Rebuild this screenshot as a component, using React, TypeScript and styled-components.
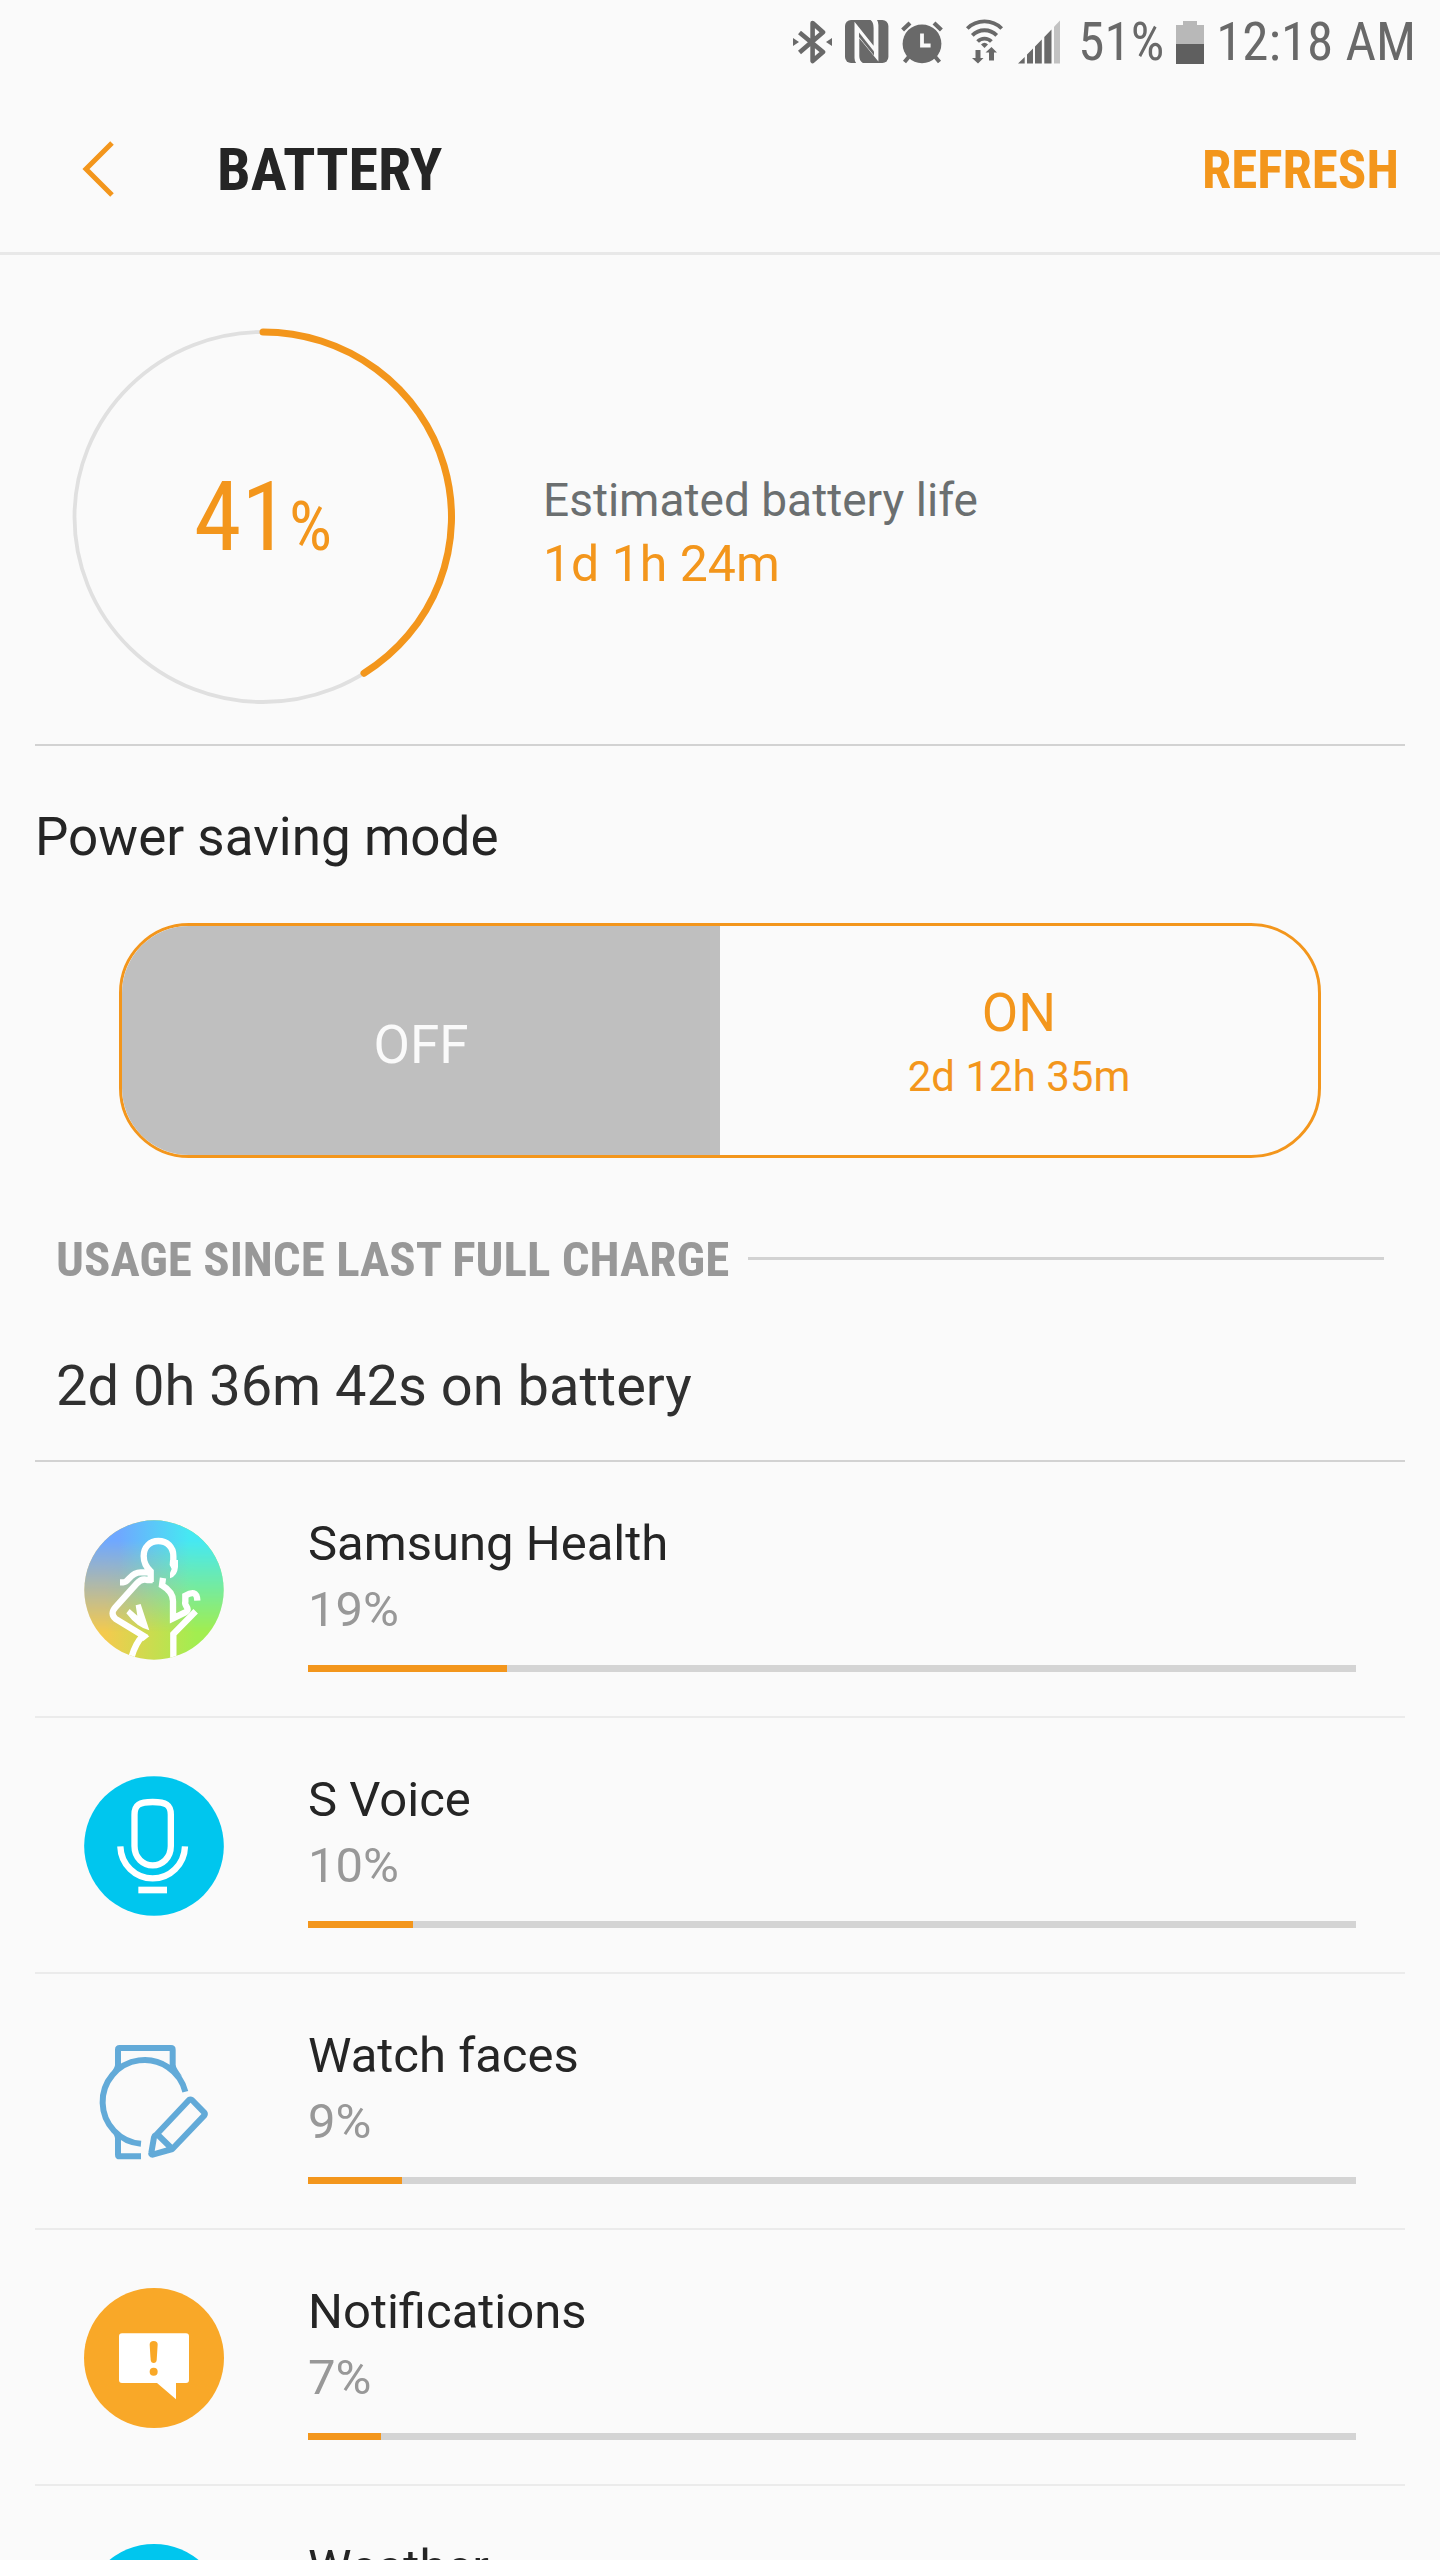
import React, { useState } from "react";
import styled, { createGlobalStyle } from "styled-components";

const color = {
  page: "#fafafa",
  accent: "#f3961c",
  ink: "#252525",
  body: "#303030",
  label: "#6b6f70",
  status: "#696969",
  muted: "#989898",
  rule: "#d2d2d2",
  hairline: "#ebebeb",
};

const condensed = `"Roboto Condensed", Roboto, sans-serif`;

const GlobalStyle = createGlobalStyle`
  *, *::before, *::after { box-sizing: border-box; }
  body { margin: 0; background: ${color.page}; font-family: Roboto, sans-serif; color: ${color.ink}; }
  h1, h2, h3, p, ul { margin: 0; padding: 0; font-weight: 400; }
  button { border: 0; padding: 0; background: none; font: inherit; color: inherit; cursor: pointer; }
  svg { display: block; flex: none; }
`;

const Screen = styled.div`
  display: flex;
  flex-direction: column;
  height: 100vh;
  overflow: hidden;
`;

const StatusBar = styled.div`
  flex: none;
  display: flex;
  align-items: center;
  justify-content: flex-end;
  gap: 12px;
  height: 88px;
  padding: 0 24px 4px 0;
  color: ${color.status};
  font: 400 53px/64px ${condensed};
`;

const StatusPercent = styled.span`
  padding-left: 6px;
`;

const Header = styled.header`
  flex: none;
  display: flex;
  align-items: center;
  height: 167px;
  padding: 0 41px 0 76px;
  border-bottom: 3px solid #e8e8e8;
`;

const Title = styled.h1`
  flex: 1;
  margin-left: 93px;
  font: 700 60px/72px ${condensed};
`;

const Refresh = styled.button`
  color: ${color.accent};
  font: 700 53px/64px ${condensed};
`;

const Content = styled.main`
  flex: 1;
  min-height: 0;
  overflow-y: auto;
  scrollbar-width: none;
  padding: 0 35px;
`;

const Summary = styled.section`
  display: flex;
  align-items: center;
  gap: 88px;
  padding: 73px 0 40px 36px;
  border-bottom: 2px solid ${color.rule};
`;

const Gauge = styled.div`
  display: grid;
  place-items: center;
  & > * { grid-area: 1 / 1; }
`;

const GaugeValue = styled.p`
  padding-top: 12px;
  color: ${color.accent};
  font: 400 96px/112px ${condensed};
`;

const GaugeUnit = styled.span`
  font-size: 68px;
`;

const Estimate = styled.div`
  padding-top: 32px;
  line-height: 64px;
`;

const EstimateLabel = styled.h2`
  color: ${color.label};
  font-size: 46px;
`;

const EstimateValue = styled.p`
  color: ${color.accent};
  font-size: 50px;
`;

const PowerSection = styled.section`
  padding-top: 58px;
`;

const PowerTitle = styled.h2`
  font-size: 53px;
  line-height: 66px;
`;

const Toggle = styled.div`
  display: grid;
  grid-template-columns: 1fr 1fr;
  height: 235px;
  margin: 53px 84px 0;
  border: 3px solid ${color.accent};
  border-radius: 70px;
  overflow: hidden;
`;

const ToggleOption = styled.button<{ $active: boolean }>`
  display: flex;
  flex-direction: column;
  align-items: center;
  justify-content: center;
  padding-top: 8px;
  background: ${(p) => (p.$active ? "#bfbfbf" : "transparent")};
  color: ${(p) => (p.$active ? color.page : color.accent)};
  font-size: 53px;
  line-height: 64px;
`;

const ToggleNote = styled.span`
  font-size: 42px;
`;

const UsageHeading = styled.div`
  display: flex;
  align-items: center;
  gap: 19px;
  margin-top: 72px;
  padding: 0 21px;
`;

const UsageTitle = styled.h2`
  color: ${color.muted};
  font: 700 49px/60px ${condensed};
`;

const UsageRule = styled.span`
  flex: 1;
  height: 3px;
  margin-bottom: 4px;
  background: ${color.rule};
`;

const OnBattery = styled.p`
  padding: 56px 21px 34px;
  border-bottom: 2px solid ${color.rule};
  color: ${color.body};
  font-size: 56px;
  line-height: 80px;
`;

const AppList = styled.ul`
  list-style: none;
`;

const AppRow = styled.li`
  display: flex;
  align-items: center;
  gap: 84px;
  padding: 0 49px;
  border-bottom: 2px solid ${color.hairline};

  & > svg { margin-top: 2px; }
`;

const AppInfo = styled.div`
  flex: 1;
  padding: 49px 0 44px;
  font-size: 49px;
  line-height: 66px;
`;

const AppName = styled.h3`
  font-size: inherit;
`;

const AppPercent = styled.p`
  color: ${color.muted};
`;

const Track = styled.div`
  height: 7px;
  margin-top: 22px;
  background: #d4d4d4;
`;

const Fill = styled.div`
  height: 100%;
  background: ${color.accent};
`;

const BluetoothIcon = () => (
  <svg width="40" height="44" viewBox="793 19 40 44" aria-hidden="true">
    <path d="M799.5 31.5 823 51 812.6 60V22L823 31.2 799.5 51.5" fill="none" stroke={color.status} strokeWidth="4.6" strokeLinejoin="round" />
    <path d="M793 37v8l6-4zM832 37v8l-6-4z" fill={color.status} />
  </svg>
);

const NfcIcon = () => (
  <svg width="44" height="44" viewBox="0 0 44 44" aria-hidden="true">
    <rect width="43.4" height="43" rx="6" fill={color.status} />
    <path d="M9.5 1.7 28.6 25.7V8Q28.6 2 25.5 0h6.5q1.4 2 1.4 5v36.5L14.3 18.3V36q0 5 3.6 7h-6.8q-1.6-2-1.6-5z" fill={color.page} />
    <path d="m14 12.5 15 19v4L14 17z" fill={color.status} />
  </svg>
);

const AlarmIcon = () => (
  <svg width="42" height="44" viewBox="900 19 42 44" aria-hidden="true">
    <circle cx="921" cy="42.8" r="19.4" fill={color.status} />
    <path d="M901.6 29 909 22M940.4 29 933 22" stroke={color.status} strokeWidth="4.2" />
    <path d="m903.5 61 5-6M938.5 61l-5-6" stroke={color.status} strokeWidth="4" />
    <path d="M921 32.5v12h8.6" fill="none" stroke={color.page} strokeWidth="3.8" />
  </svg>
);

const WifiIcon = () => (
  <svg width="51" height="46" viewBox="955 18 51 46" aria-hidden="true">
    <g fill="none" stroke={color.status} strokeWidth="3.8">
      <path d="M967.3 27.5a24.5 24.5 0 0 1 34.4 0" />
      <path d="M972.3 34.4a17 17 0 0 1 24.4 0" />
      <path d="M977.6 40.5a9.6 9.6 0 0 1 13.8 0" />
    </g>
    <path d="M984.5 47 981 43.4q3.5-3.2 7 0z" fill={color.status} />
    <path d="M975.5 49h5v8h3l-5.5 5.5-6-5.5h3.5zM989 59.5v-8h-3.5l6-5.5 5.5 5.5h-3v8z" fill={color.status} />
  </svg>
);

const SignalIcon = () => (
  <svg width="42" height="44" viewBox="1018 18.5 42 44" aria-hidden="true">
    <path d="M1018 62 1024.7 55.5V62zM1027 53l6-6v15h-6zM1035 45l6.8-7v24H1035zM1044.3 35.5l7.2-7.5v34h-7.2z" fill={color.status} />
    <path d="m1054 25.2 6-6.2v43h-6z" fill="#c2c2c2" />
  </svg>
);

const BatteryIcon = () => (
  <svg width="28" height="43" viewBox="0 0 28 43" aria-hidden="true">
    <path d="M7 0h14v4h7v39H0V4h7z" fill="#b8b8b8" />
    <path d="M0 23h28v20H0z" fill="#5f5f5f" />
  </svg>
);

const BackIcon = () => (
  <svg width="48" height="72" viewBox="76 134 48 72" aria-hidden="true">
    <path d="M112 143 86 169l26 26" fill="none" stroke={color.accent} strokeWidth="5" />
  </svg>
);

/* Slightly elliptical dial, filled clockwise from the top. */
const Dial = ({ percent }: { percent: number }) => {
  const angle = (percent / 100) * Math.PI * 2;
  const rx = 188.5;
  const ry = 185;
  const x = 192 + rx * Math.sin(angle);
  const y = 189 - ry * Math.cos(angle);
  return (
    <svg width="384" height="376" viewBox="0 0 384 376" fill="none" aria-hidden="true">
      <ellipse cx="192" cy="189" rx={rx} ry={ry} stroke="#e0e0e0" strokeWidth="3.8" />
      <path
        d={`M192 4A${rx} ${ry} 0 ${percent > 50 ? 1 : 0} 1 ${x} ${y}`}
        stroke={color.accent}
        strokeWidth="7"
        strokeLinecap="round"
      />
    </svg>
  );
};

const HealthIcon = () => (
  <svg width="140" height="140" viewBox="72 89 420 420" aria-hidden="true">
    <defs>
      <linearGradient id="health-low" x1="0.15" x2="0.8">
        <stop offset="0" stopColor="#f4ca4e" />
        <stop offset="1" stopColor="#a2ee50" />
      </linearGradient>
      <linearGradient id="health-high" x1="0.25" x2="0.75">
        <stop offset="0" stopColor="#6fa8ff" />
        <stop offset="1" stopColor="#46e8f2" />
      </linearGradient>
      <linearGradient id="health-fade" x1="0" x2="0" y1="0.15" y2="0.8">
        <stop offset="0" stopColor="#fff" />
        <stop offset="1" stopColor="#000" />
      </linearGradient>
      <mask id="health-mask">
        <rect x="72" y="89" width="420" height="420" fill="url(#health-fade)" />
      </mask>
      <clipPath id="health-clip">
        <circle cx="282" cy="299" r="209" />
      </clipPath>
    </defs>
    <g clipPath="url(#health-clip)">
      <rect x="72" y="89" width="420" height="420" fill="url(#health-low)" />
      <rect x="72" y="89" width="420" height="420" fill="url(#health-high)" mask="url(#health-mask)" />
      <g fill="none" stroke="#fff" strokeWidth="19">
        <path d="M272 275V243C259 231 251 215 251 197C251 170 270 152 295 152C321 152 340 170 340 197V215" />
        <path d="M180 276H190C207 276 210 246 242 246H274" />
        <path d="M278 269H262C248 264 238 271 230 280L166 351Q149 370 167 386L250 436C232 452 222 474 214 502" />
        <path d="M309 263 306 285C326 297 339 310 339 332V384L374 367C396 355 370 346 376 334V316C396 304 411 304 412 331" />
        <path d="M407 363 340 431V505" />
      </g>
      <path d="M238 429 268 438 250 452zM330 209H354V230Q352 257 330 264V248L335 236 329 224z" fill="#fff" />
      <path d="M227 345 242 341 268 420Q232 412 199 369L209 356 232 376z" fill="#fff" />
    </g>
  </svg>
);

const VoiceIcon = () => (
  <svg width="140" height="140" viewBox="72 80 420 420" aria-hidden="true">
    <circle cx="282" cy="290" r="209.5" fill="#00c6ee" />
    <g fill="none" stroke="#fff" strokeWidth="19">
      <path d="M223.5 196C223.5 166 238 158 278 158S332.5 166 332.5 196V290C332.5 326 306 348 278 348S223.5 326 223.5 290z" />
      <path d="M181 291C183 346 226 387 278 387S373 346 375 291" />
    </g>
    <path d="M235 412h86v20h-86z" fill="#fff" />
  </svg>
);

const WatchIcon = () => (
  <svg width="140" height="140" viewBox="72 66 420 420" aria-hidden="true">
    <g fill="none" stroke="#62aad8" strokeWidth="18" strokeLinejoin="round">
      <path d="M174 172V119Q174 114 179 114H333Q338 114 338 119V172" />
      <path d="M243 401.5A126 126 0 1 1 376 245" />
      <path d="M174 376V434Q174 439 179 439H243" />
      <path d="M291 372 387 270Q391 267 396 270L433 308Q436 312 433 316L337 417 278 434Q272 434 274 428L282 382Q284 376 291 372zM291 372 337 417" />
    </g>
    <path d="M165 166Q164 175 146 198L183 172zM347 166Q348 175 366 198L330 172zM165 384Q164 374 146 350L183 378z" fill="#62aad8" />
  </svg>
);

const NotificationIcon = () => (
  <svg width="140" height="140" viewBox="72 84 420 420" aria-hidden="true">
    <circle cx="282" cy="294" r="210" fill="#f9a828" />
    <path d="M186 220H378Q387 220 387 229V360Q387 369 378 369H348V418L291 369H186Q177 369 177 360V229Q177 220 186 220z" fill="#fff" />
    <path d="M269 254Q269 243 281 243T293 254L290 300Q289 309 281 309T272 300z" fill="#f9a828" />
    <circle cx="281" cy="335" r="12" fill="#f9a828" />
  </svg>
);

const WeatherIcon = () => (
  <svg width="140" height="140" viewBox="0 0 140 140" aria-hidden="true">
    <circle cx="70" cy="70" r="70" fill="#00c6ee" />
    <path d="M48 96a16 16 0 0 1 0-32 24 24 0 0 1 46 4 14 14 0 0 1 0 28z" fill="none" stroke="#fff" strokeWidth="6" />
  </svg>
);

const apps = [
  { name: "Samsung Health", percent: 19, Icon: HealthIcon },
  { name: "S Voice", percent: 10, Icon: VoiceIcon },
  { name: "Watch faces", percent: 9, Icon: WatchIcon },
  { name: "Notifications", percent: 7, Icon: NotificationIcon },
  { name: "Weather", percent: 6, Icon: WeatherIcon },
];

export default function App() {
  const [saving, setSaving] = useState(false);
  return (
    <Screen>
      <GlobalStyle />
      <StatusBar>
        <BluetoothIcon />
        <NfcIcon />
        <AlarmIcon />
        <WifiIcon />
        <SignalIcon />
        <StatusPercent>51%</StatusPercent>
        <BatteryIcon />
        <time>12:18 AM</time>
      </StatusBar>
      <Header>
        <button type="button" aria-label="Back">
          <BackIcon />
        </button>
        <Title>BATTERY</Title>
        <Refresh type="button">REFRESH</Refresh>
      </Header>
      <Content>
        <Summary>
          <Gauge>
            <Dial percent={41} />
            <GaugeValue>
              41<GaugeUnit>%</GaugeUnit>
            </GaugeValue>
          </Gauge>
          <Estimate>
            <EstimateLabel>Estimated battery life</EstimateLabel>
            <EstimateValue>1d 1h 24m</EstimateValue>
          </Estimate>
        </Summary>
        <PowerSection>
          <PowerTitle id="power-title">Power saving mode</PowerTitle>
          <Toggle role="group" aria-labelledby="power-title">
            <ToggleOption type="button" $active={!saving} aria-pressed={!saving} onClick={() => setSaving(false)}>
              OFF
            </ToggleOption>
            <ToggleOption type="button" $active={saving} aria-pressed={saving} onClick={() => setSaving(true)}>
              <span>ON</span>
              <ToggleNote>2d 12h 35m</ToggleNote>
            </ToggleOption>
          </Toggle>
        </PowerSection>
        <section>
          <UsageHeading>
            <UsageTitle>USAGE SINCE LAST FULL CHARGE</UsageTitle>
            <UsageRule />
          </UsageHeading>
          <OnBattery>2d 0h 36m 42s on battery</OnBattery>
          <AppList>
            {apps.map(({ name, percent, Icon }) => (
              <AppRow key={name}>
                <Icon />
                <AppInfo>
                  <AppName>{name}</AppName>
                  <AppPercent>{percent}%</AppPercent>
                  <Track>
                    <Fill style={{ width: `${percent}%` }} />
                  </Track>
                </AppInfo>
              </AppRow>
            ))}
          </AppList>
        </section>
      </Content>
    </Screen>
  );
}
